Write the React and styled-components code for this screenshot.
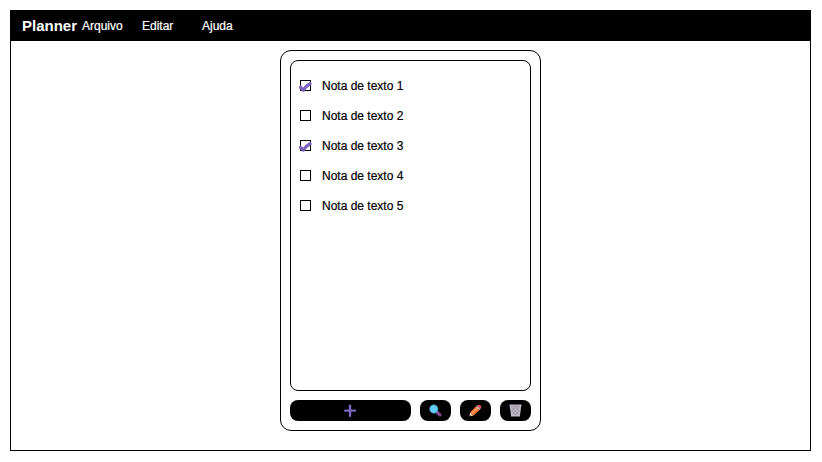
import React from 'react';
import styled, { createGlobalStyle } from 'styled-components';

const GlobalStyle = createGlobalStyle`
  *, *::before, *::after { box-sizing: border-box; }
  body {
    margin: 0;
    background: #fff;
    color: #000;
    font-family: "Liberation Sans", Arial, sans-serif;
    font-size: 12px;
    -webkit-text-stroke: 0.2px currentColor;
  }
`;

const Window = styled.div`
  width: 801px;
  height: 441px;
  margin: 10px;
  border: 1px solid #000;
`;

const MenuBar = styled.header`
  display: flex;
  align-items: center;
  height: 30px;
  padding-left: 11px;
  background: #000;
  color: #fff;
`;

const Brand = styled.h1`
  width: 60px;
  margin: 0;
  font-size: 15px;
  line-height: 30px;
  -webkit-text-stroke: 0;
`;

const MenuItem = styled.a`
  width: 60px;
  line-height: 30px;
`;

const Card = styled.main`
  display: flex;
  flex-direction: column;
  gap: 9px;
  width: 261px;
  height: 381px;
  margin: 9px auto 0;
  padding: 9px;
  border: 1px solid #000;
  border-radius: 11px;
`;

const NoteList = styled.ul`
  height: 331px;
  margin: 0;
  padding: 10px 9px;
  border: 1px solid #000;
  border-radius: 8px;
  list-style: none;
`;

const Note = styled.li`
  display: flex;
  align-items: flex-start;
  gap: 11px;
  height: 30px;
  line-height: 30px;
`;

const Checkbox = styled.span`
  width: 11px;
  height: 11px;
  margin-top: 9px;
  border: 1px solid #000;

  svg {
    display: block;
    margin: 0 0 0 -2px;
    overflow: visible;
  }
`;

const Actions = styled.div`
  display: grid;
  grid-template-columns: 121px 31px 31px 31px;
  gap: 9px;
`;

const ActionButton = styled.button`
  display: flex;
  align-items: center;
  justify-content: center;
  height: 21px;
  padding: 0;
  border: 0;
  border-radius: 8px;
  background: #000;
`;

const CheckIcon = () => (
  <svg width="13" height="11" viewBox="0 0 13 11">
    <path d="M1.6 6.4 L4.4 9 Q6.8 5 11 2.7" fill="none" stroke="#7a62bd" strokeWidth="3.4" strokeLinecap="round" strokeLinejoin="round" />
  </svg>
);

const PlusIcon = () => (
  <svg width="13" height="13" viewBox="0 0 13 13">
    <path d="M6 1.7 V11.8 M1.2 6.6 H10.9" stroke="#7b65bd" strokeWidth="2.4" strokeLinecap="round" />
  </svg>
);

const SearchIcon = () => (
  <svg width="13" height="13" viewBox="0 0 13 13">
    <path d="M7.8 8 L10.8 10.9" stroke="#854790" strokeWidth="3.2" strokeLinecap="round" />
    <circle cx="4.8" cy="5" r="4.2" fill="#60cdf1" stroke="#4189b0" strokeWidth="0.6" />
  </svg>
);

const PencilIcon = () => (
  <svg width="13" height="13" viewBox="0 0 13 13">
    <path d="M0.4 12.2 L1.1 8.4 L4.6 11.6 Z" fill="#f5d3b5" />
    <path d="M1.1 8.4 L7.1 2.2 L10.8 5.7 L4.6 11.6 Z" fill="#f8793b" />
    <path d="M2.8 9.6 L8.9 3.7" stroke="#ff9e5b" strokeWidth="1.2" />
    <path d="M7 2.5 L8 1.5 L11.5 4.9 L10.4 6 Z" fill="#c3b6bd" />
    <path d="M8 1.7 Q9.7 -.2 11.6 1.5 Q13.2 3.2 11.3 4.9 Z" fill="#ef5361" />
    <path d="M.4 12.2 L.8 10.7 L1.9 11.8 Z" fill="#654451" />
  </svg>
);

const TrashIcon = () => (
  <svg width="13" height="13" viewBox="0 0 13 13">
    <path d="M.7 1 H12.3 L10.9 12.4 H2.1 Z" fill="#c3bdcb" />
    <path d="M3 3.5 L9.8 10.5 M6.2 3 L10.5 7.2 M2.6 6.8 L6.8 11.2 M10 3.5 L3.2 10.5 M6.8 3 L2.5 7.2 M10.4 6.8 L6.2 11.2" stroke="#817b8a" strokeWidth=".6" />
    <path d="M2.2 2.6 H10.8" stroke="#8f8999" strokeWidth=".7" />
    <path d="M1.1 1.2 H11.9" stroke="#bbb4c4" strokeWidth="1.5" strokeLinecap="round" />
  </svg>
);

const menu = ['Arquivo', 'Editar', 'Ajuda'];

const notes = [
  { text: 'Nota de texto 1', done: true },
  { text: 'Nota de texto 2', done: false },
  { text: 'Nota de texto 3', done: true },
  { text: 'Nota de texto 4', done: false },
  { text: 'Nota de texto 5', done: false },
];

export default function App() {
  return (
    <>
      <GlobalStyle />
      <Window>
        <MenuBar>
          <Brand>Planner</Brand>
          {menu.map((label) => <MenuItem key={label}>{label}</MenuItem>)}
        </MenuBar>
        <Card>
          <NoteList>
            {notes.map(({ text, done }) => (
              <Note key={text}>
                <Checkbox role="checkbox" aria-checked={done}>{done && <CheckIcon />}</Checkbox>
                {text}
              </Note>
            ))}
          </NoteList>
          <Actions>
            <ActionButton><PlusIcon /></ActionButton>
            <ActionButton><SearchIcon /></ActionButton>
            <ActionButton><PencilIcon /></ActionButton>
            <ActionButton><TrashIcon /></ActionButton>
          </Actions>
        </Card>
      </Window>
    </>
  );
}
